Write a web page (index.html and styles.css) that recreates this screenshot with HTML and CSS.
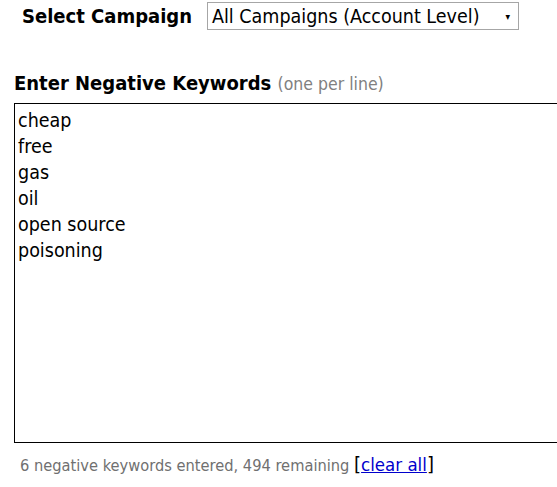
FILE: index.html
```html
<!DOCTYPE html>
<html>
<head>
<meta charset="utf-8">
<link rel="stylesheet" href="styles.css">
</head>
<body>
<div class="page">
  <div class="campaign-row">
    <label class="campaign-label" for="campaign">Select Campaign</label>
    <div class="select-box">
      <span class="select-text">All Campaigns (Account Level)</span>
      <span class="select-arrow">&#9662;</span>
    </div>
  </div>
  <h2 class="kw-title">Enter Negative Keywords <span class="kw-hint">(one per line)</span></h2>
  <div class="kw-area">cheap
free
gas
oil
open source
poisoning</div>
  <p class="kw-status">6 negative keywords entered, 494 remaining <span class="bracket">[</span><a href="#" class="clear-link">clear all</a><span class="bracket">]</span></p>
</div>
</body>
</html>
```

FILE: styles.css
```css
html, body {
  margin: 0;
  padding: 0;
  background: #ffffff;
  overflow: hidden;
}
.page {
  font-family: "DejaVu Sans Condensed", "DejaVu Sans", sans-serif;
  color: #000;
  padding-left: 14px;
}
.campaign-row {
  display: flex;
  align-items: center;
  padding-top: 2px;
  padding-left: 8px;
  height: 28px;
}
.campaign-label {
  font-weight: bold;
  font-size: 20px;
  width: 185px;
}
.select-box {
  box-sizing: border-box;
  width: 312px;
  height: 28px;
  border: 1px solid #a6a6a6;
  display: flex;
  align-items: center;
  justify-content: space-between;
  padding: 0 8px 0 4px;
  font-size: 19.5px;
}
.select-arrow {
  font-size: 10px;
}
.kw-title {
  margin: 42px 0 0 0;
  font-size: 20px;
  font-weight: bold;
  line-height: 22px;
}
.kw-hint {
  font-weight: normal;
  font-size: 17.5px;
  color: #808080;
}
.kw-area {
  box-sizing: border-box;
  margin-top: 8px;
  height: 340px;
  border: 1px solid #000;
  border-right: none;
  white-space: pre;
  font-size: 19.5px;
  line-height: 26px;
  padding: 4px 3px;
}
.kw-status {
  margin: 9px 0 0 6px;
  font-size: 16.3px;
  color: #707070;
  line-height: 24px;
}
.bracket {
  font-size: 20px;
  color: #000;
}
.clear-link {
  color: #0000cc;
  font-size: 18.5px;
}
```
